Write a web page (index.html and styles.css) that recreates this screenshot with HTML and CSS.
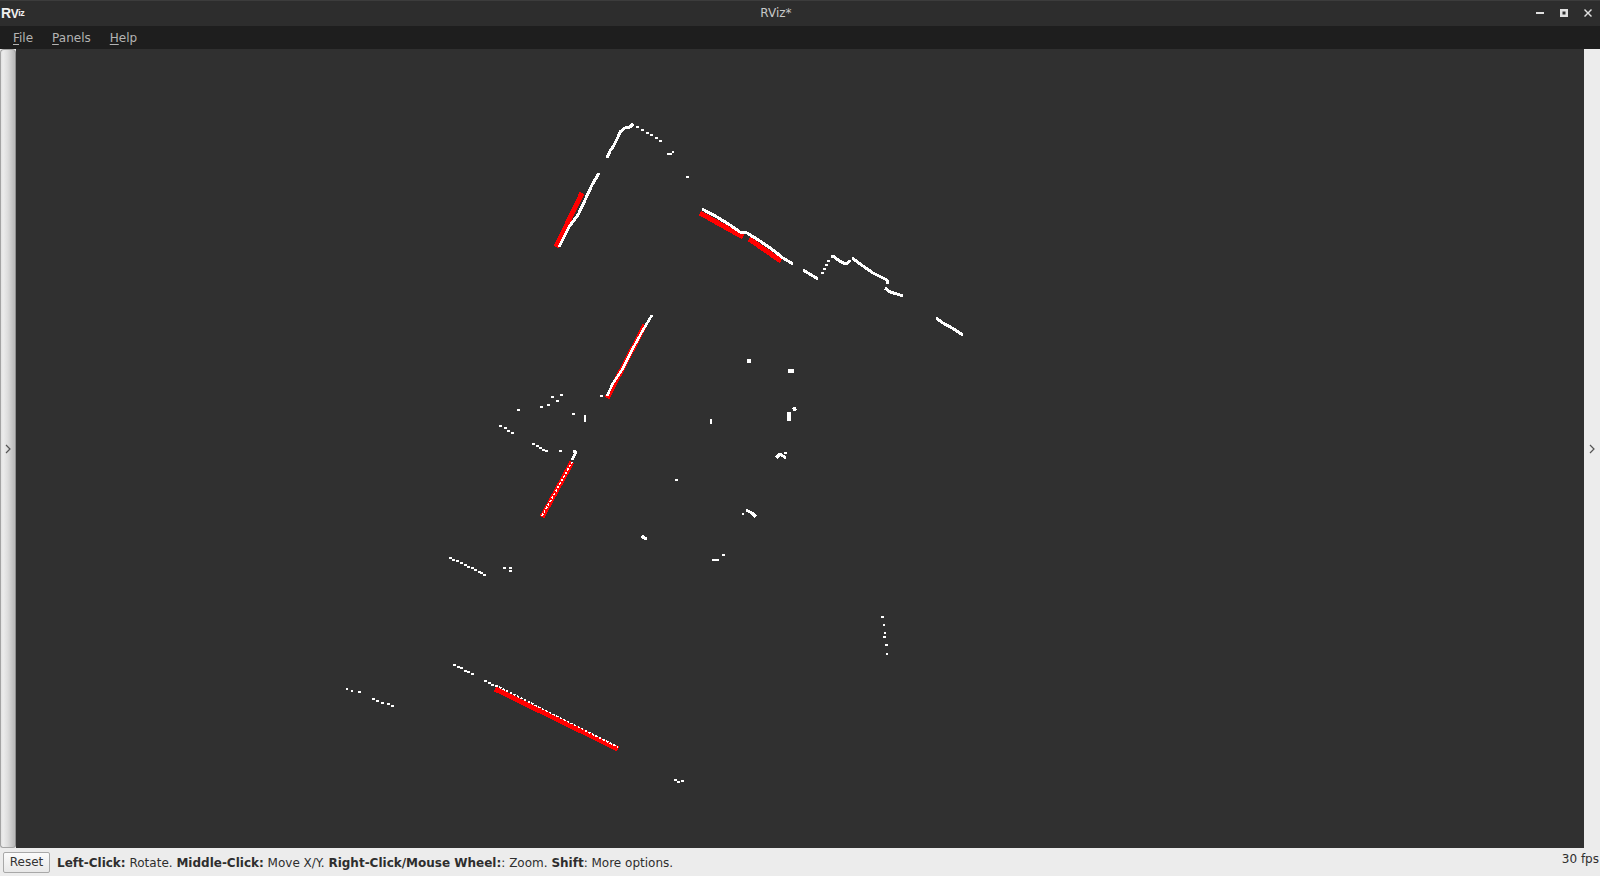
FILE: index.html
```html
<!DOCTYPE html>
<html lang="en">
<head>
    <meta charset="UTF-8">
    <title>RViz*</title>
    <link rel="stylesheet" href="styles.css">
</head>
<body>
    <!-- Window title bar -->
    <header class="titlebar">
        <div class="logo">R<span class="logo-v">V</span><span class="logo-iz">iz</span></div>
        <div class="window-title">RViz*</div>
        <div class="window-buttons">
            <svg width="8" height="8" viewBox="0 0 8 8"><rect y="3" width="8" height="2"></rect></svg>
            <svg width="8" height="8" viewBox="0 0 8 8"><path fill-rule="evenodd" d="M0 0h8v8H0zM2.500 2.500v3h3v-3z"></path></svg>
            <svg width="8" height="8" viewBox="0 0 8 8"><path d="M0 1l1-1 3 3 3-3 1 1-3 3 3 3-1 1-3-3-3 3-1-1 3-3z"></path></svg>
        </div>
    </header>

    <nav class="menubar">
        <span class="menu-item"><u>F</u>ile</span>
        <span class="menu-item"><u>P</u>anels</span>
        <span class="menu-item"><u>H</u>elp</span>
    </nav>

    <main class="workspace">
        <div class="dock-handle">
            <svg class="chevron" width="6" height="10" viewBox="0 0 6 10"><path d="M1 1l4 4-4 4"></path></svg>
        </div>

        <!-- Laser scan view, coordinates are window pixels -->
        <div class="viewport">
            <svg class="scan" viewBox="16 49 1568 799" preserveAspectRatio="none">
                <path class="wall" d="M556 247L582 193M700 213L743 237M749 239L781 261M607 398L645 325M542 517L572 462M495 689L618 749"></path>

                <path class="scan-thick" d="M559 247L569 227L578 215L586 198L592 185L599 173"></path>
                <path class="scan-thick" d="M607 158L610 151L613 147L618 137L620 132L625 128L630 127L633 124"></path>
                <path class="scan-thick" d="M702 209L717 217L730 225L740 232L747 233L760 241L773 250L783 258L793 264"></path>
                <path class="scan-thick" d="M803 270L808 273L813 276L818 279"></path>
                <path class="scan-thick" d="M831 257L833 256L838 260L845 264L848 263L850 260"></path>
                <path class="scan-thick" d="M852 258L863 266L873 273L887 280L887 284"></path>
                <path class="scan-thick" d="M885 288L890 292L897 294L903 296"></path>
                <path class="scan-thick" d="M936 318L943 323L952 328L963 335"></path>
                <path class="scan-dots" d="M607 396L613 383L622 370L632 350L643 330L652 315"></path>
                <path class="scan-thick" d="M776 458L780 454L786 458"></path>
                <path class="scan-thick" d="M746 510L752 513L756 517"></path>
                <path class="scan-thick" d="M642 536L644 538L647 538"></path>
                <path class="scan-thick" d="M573 451L576 452L572 460"></path>
                <path class="scan-blob" d="M789 412V421M793 410L796 408M788 371H794M747 361H751"></path>

                <path class="scan-dashed" d="M542 516L572 462"></path>
                <path class="scan-dashed" d="M499 687L618 747"></path>

                <path class="scan-dots" d="M636 127h3M641 130h3M646 133h3M650 135h3M655 138h3M659 141h3M667 154h3M670 154h2M672 152h2M686 177h3
                    M821 273h3M823 269h3M825 265h3M827 261h3
                    M600 396h3M560 395h3M551 397h3M556 401h3M547 405h3M540 407h3M517 410h3M572 414h3M585 415v7M499 426h3M504 428h3M507 431h3M511 433h3
                    M532 444h3M536 446h3M539 448h3M542 450h3M545 451h3M559 451h3
                    M711 419v5M675 480h3M742 514h2M712 560h7M722 555h3M784 453h3
                    M449 558h3M452 560h3M456 561h3M460 563h3M464 565h3M467 567h3M471 568h3M474 570h3M478 572h3M480 573h3M483 575h3M503 568h3M509 568h3M509 571h3
                    M453 665h3M457 667h3M460 668h3M464 671h3M467 672h3M471 674h3M484 681h3M488 683h3M491 685h3M495 686h3
                    M346 689h2M351 691h2M358 692h3M372 699h3M376 701h3M381 703h3M387 704h3M391 706h3
                    M881 617h3M883 625h2M884 633h2M883 637h3M885 645h3M886 654h2M674 780h3M677 782h3M681 781h3"></path>
            </svg>
        </div>

        <div class="side-handle">
            <svg class="chevron" width="6" height="10" viewBox="0 0 6 10"><path d="M1 1l4 4-4 4"></path></svg>
        </div>
    </main>

    <footer class="statusbar">
        <button class="reset-btn">Reset</button>
        <p class="hint"><b>Left-Click:</b> Rotate. <b>Middle-Click:</b> Move X/Y. <b>Right-Click/Mouse Wheel:</b>: Zoom. <b>Shift</b>: More options.</p>
        <span class="fps">30 fps</span>
    </footer>
</body>
</html>
```

FILE: styles.css
```css
* {
    box-sizing: border-box;
}

html, body {
    height: 100%;
}

body {
    margin: 0;
    display: flex;
    flex-direction: column;
    overflow: hidden;
    font-family: "DejaVu Sans", sans-serif;
    font-size: 12px;
    background-color: #ececec;
}

/* Title bar */
.titlebar {
    height: 26px;
    display: flex;
    align-items: center;
    justify-content: space-between;
    position: relative;
    padding-left: 1px;
    background-color: #2d2d2d;
    border-top: 1px solid #3c3c3c;
    color: #c8c8c8;
}

.logo {
    width: 24px;
    margin-top: -1px;
    font-family: "Liberation Sans", sans-serif;
    font-weight: bold;
    font-size: 14px;
    letter-spacing: -0.5px;
    line-height: 1;
    color: #f0f0f0;
    white-space: nowrap;
}

.logo-v {
    font-size: 12px;
}

.logo-iz {
    font-size: 9px;
    vertical-align: 2px;
}

.window-title {
    position: absolute;
    left: 0;
    right: 48px;
    top: 5px;
    text-align: center;
    font-size: 12px;
    line-height: 14px;
}

.window-buttons {
    display: flex;
    gap: 16px;
    padding-right: 8px;
    margin-top: -1px;
}

.window-buttons svg {
    fill: #e0e0e0;
}

/* Menu bar */
.menubar {
    height: 23px;
    display: flex;
    align-items: center;
    gap: 19px;
    padding-left: 13px;
    background-color: #1e1e1e;
    color: #b4b4b4;
    font-size: 12px;
}

.menu-item u {
    text-underline-offset: 2px;
}

/* Main area */
.workspace {
    flex: 1;
    display: flex;
    min-height: 0;
}

.dock-handle {
    width: 16px;
    display: flex;
    align-items: center;
    justify-content: center;
    padding-right: 1px;
    background: linear-gradient(to right, #e2e2e2 0, #ececec 15%, #dcdcdc 50%, #bcbcbc 92%);
    border: 1px solid #a4a4a4;
    border-right: 1px solid #8e8e8e;
    border-radius: 4px 4px 3px 3px;
}

.side-handle {
    width: 16px;
    display: flex;
    align-items: center;
    justify-content: center;
    background-color: #ececec;
}

.chevron {
    fill: none;
    stroke: #555;
    stroke-width: 1.2;
}

.viewport {
    flex: 1;
    min-width: 0;
    background-color: #303030;
}

.scan {
    display: block;
    width: 100%;
    height: 100%;
    shape-rendering: crispEdges;
    fill: none;
}

.wall {
    stroke: #ff0000;
    stroke-width: 5;
}

.scan-thick {
    stroke: #fff;
    stroke-width: 3;
    stroke-linejoin: round;
}

.scan-blob {
    stroke: #fff;
    stroke-width: 4;
}

.scan-dashed {
    stroke: #fff;
    stroke-width: 1.600;
    stroke-dasharray: 2.500 1.500;
}

.scan-dots {
    stroke: #fff;
    stroke-width: 2.500;
}

/* Status bar */
.statusbar {
    height: 28px;
    display: flex;
    align-items: center;
    padding: 0 1px 0 3px;
    background-color: #ececec;
    color: #2e2e2e;
}

.reset-btn {
    width: 47px;
    height: 21px;
    margin-right: 7px;
    padding: 0;
    font-family: inherit;
    font-size: 12px;
    color: #333;
    background: linear-gradient(#fbfbfb, #e8e8e8);
    border: 1px solid #a8a8a8;
    border-radius: 2px;
}

.hint {
    flex: 1;
    margin: 2px 0 0;
    font-size: 12px;
}

.fps {
    align-self: flex-start;
    margin-top: 3px;
    font-size: 12px;
    line-height: 16px;
}
```
